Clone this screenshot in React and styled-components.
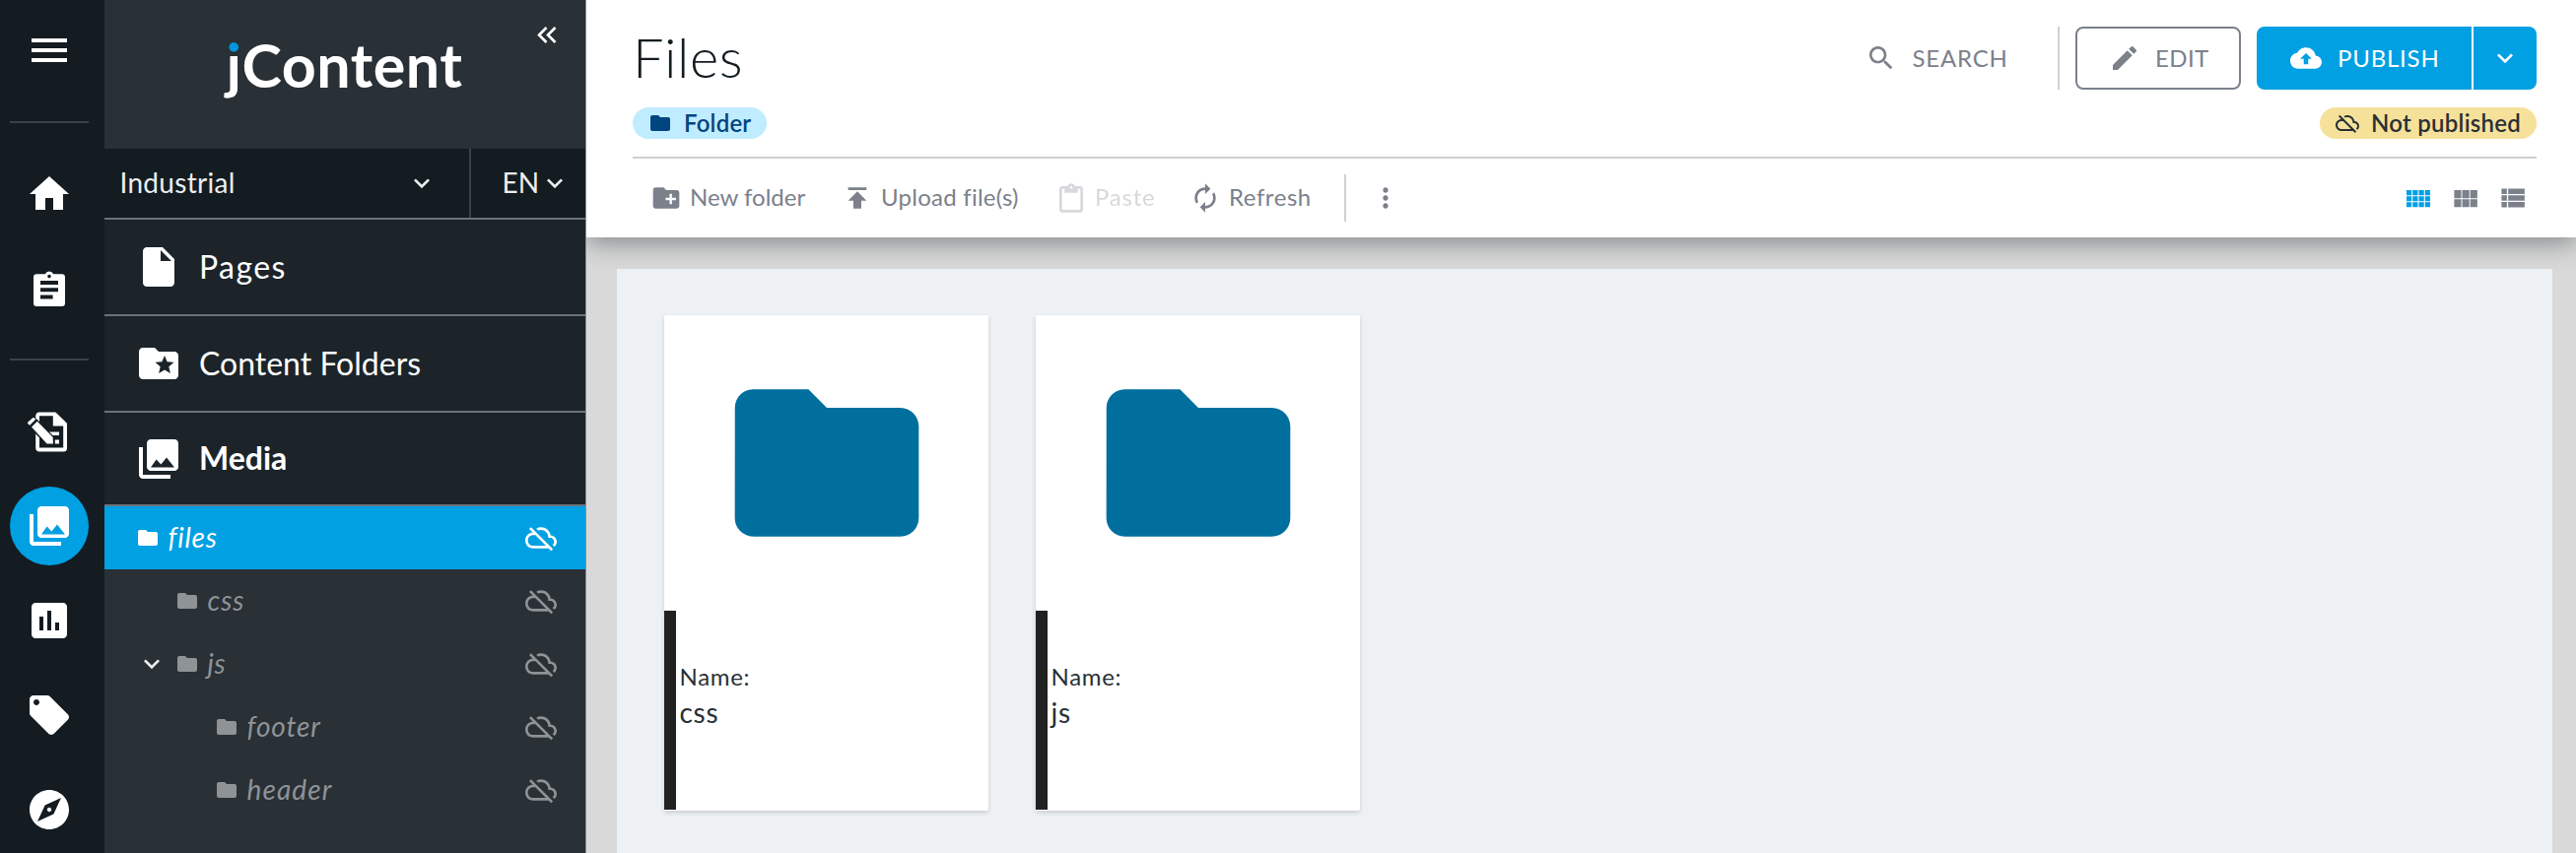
import React from "react";
import styled, { createGlobalStyle } from "styled-components";

const c = {
  rail: "#141c22",
  sidebar: "#293036",
  section: "#1c242a",
  selector: "#131c21",
  accent: "#00a0e3",
  gray: "#7b808b",
  line: "#d0d1d3",
  dark: "#131c21",
};

const GlobalStyle = createGlobalStyle`
  *, *::before, *::after { box-sizing: border-box; }
  body {
    margin: 0;
    font-family: Lato, "Open Sans", sans-serif;
    overflow: hidden;
  }
  button { font: inherit; color: inherit; background: none; border: 0; padding: 0; }
`;

/* ---------- icons ---------- */

const Svg = styled.svg`
  display: block;
  flex: none;
  width: ${(p) => p.$size}px;
  height: ${(p) => p.$size}px;
  fill: currentColor;
`;

const paths = {
  menu: "M3 18h18v-2H3v2zm0-5h18v-2H3v2zm0-7v2h18V6H3z",
  home: "M10 20v-6h4v6h5v-8h3L12 3 2 12h3v8z",
  collections:
    "M22 16V4c0-1.1-.9-2-2-2H8c-1.1 0-2 .9-2 2v12c0 1.1.9 2 2 2h12c1.1 0 2-.9 2-2zM10.8 12.2l2.4 2.5L16 11.2l4 5H8l2.8-4zM2 6v14c0 1.1.9 2 2 2h14v-2H4V6H2z",
  chart:
    "M19 3H5c-1.1 0-2 .9-2 2v14c0 1.1.9 2 2 2h14c1.1 0 2-.9 2-2V5c0-1.1-.9-2-2-2zM9 17H7v-7h2v7zm4 0h-2V7h2v10zm4 0h-2v-4h2v4z",
  tag: "M21.41 11.58l-9-9C12.05 2.22 11.55 2 11 2H4c-1.1 0-2 .9-2 2v7c0 .55.22 1.05.59 1.42l9 9c.36.36.86.58 1.41.58.55 0 1.05-.22 1.41-.59l7-7c.37-.36.59-.86.59-1.41 0-.55-.23-1.06-.59-1.42zM5.5 7C4.67 7 4 6.33 4 5.5S4.67 4 5.5 4 7 4.67 7 5.5 6.33 7 5.5 7z",
  compass:
    "M12 10.9c-.61 0-1.1.49-1.1 1.1s.49 1.1 1.1 1.1c.61 0 1.1-.49 1.1-1.1s-.49-1.1-1.1-1.1zM12 2C6.48 2 2 6.48 2 12s4.48 10 10 10 10-4.48 10-10S17.52 2 12 2zm2.19 12.19L6 18l3.81-8.19L18 6l-3.81 8.19z",
  file: "M6 2c-1.1 0-1.99.9-1.99 2L4 20c0 1.1.89 2 1.99 2H18c1.1 0 2-.9 2-2V8l-6-6H6zm7 7V3.5L18.5 9H13z",
  folderSpecial:
    "M20 6h-8l-2-2H4c-1.1 0-2 .9-2 2v12c0 1.1.9 2 2 2h16c1.1 0 2-.9 2-2V8c0-1.1-.9-2-2-2zm-2.06 11L15 15.28 12.06 17l.78-3.33-2.59-2.24 3.41-.29L15 8l1.34 3.14 3.41.29-2.59 2.24.78 3.33z",
  folder: "M10 4H4c-1.1 0-1.99.9-1.99 2L2 18c0 1.1.9 2 2 2h16c1.1 0 2-.9 2-2V8c0-1.1-.9-2-2-2h-8l-2-2z",
  cloudOff:
    "M24 15c0-2.64-2.05-4.78-4.65-4.96C18.67 6.59 15.64 4 12 4c-1.33 0-2.57.36-3.65.97l1.49 1.49C10.51 6.17 11.23 6 12 6c3.04 0 5.5 2.46 5.5 5.5v.5H19c1.66 0 3 1.34 3 3 0 .99-.48 1.85-1.21 2.4l1.41 1.41C23.29 17.92 24 16.54 24 15zM4.41 3.86L3 5.27l2.77 2.77h-.42C2.34 8.36 0 10.91 0 14c0 3.31 2.69 6 6 6h11.73l2 2 1.41-1.41L4.41 3.86zM6 18c-2.21 0-4-1.79-4-4s1.79-4 4-4h1.73l8 8H6z",
  chevron: "M7.41 8.59L12 13.17l4.59-4.58L18 10l-6 6-6-6z",
  search:
    "M15.5 14h-.79l-.28-.27C15.41 12.59 16 11.11 16 9.5 16 5.91 13.09 3 9.5 3S3 5.91 3 9.5 5.91 16 9.5 16c1.61 0 3.09-.59 4.23-1.57l.27.28v.79l5 4.99L20.49 19l-4.99-5zm-6 0C7.01 14 5 11.99 5 9.5S7.01 5 9.5 5 14 7.01 14 9.5 11.99 14 9.5 14z",
  edit: "M3 17.25V21h3.75L17.81 9.94l-3.75-3.75L3 17.25zM20.71 7.04c.39-.39.39-1.02 0-1.41l-2.34-2.34c-.39-.39-1.02-.39-1.41 0l-1.83 1.83 3.75 3.75 1.83-1.83z",
  cloudUpload:
    "M19.35 10.04C18.67 6.59 15.64 4 12 4 9.11 4 6.6 5.64 5.35 8.04 2.34 8.36 0 10.91 0 14c0 3.31 2.69 6 6 6h13c2.76 0 5-2.24 5-5 0-2.64-2.05-4.78-4.65-4.96zM13.7 12.6v4h-3.4v-4H7.6L12 8.2l4.4 4.4h-2.7z",
  newFolder:
    "M20 6h-8l-2-2H4c-1.11 0-1.99.89-1.99 2L2 18c0 1.11.89 2 2 2h16c1.11 0 2-.89 2-2V8c0-1.11-.89-2-2-2zm-.6 7.7h-3v3h-1.8v-3h-3v-1.8h3v-3h1.8v3h3v1.8z",
  upload: "M5 4v2h14V4H5zm0 10h4v6h6v-6h4l-7-7-7 7z",
  paste:
    "M19 3h-4.18C14.4 1.84 13.3 1 12 1c-1.3 0-2.4.84-2.82 2H5c-1.1 0-2 .9-2 2v16c0 1.1.9 2 2 2h14c1.1 0 2-.9 2-2V5c0-1.1-.9-2-2-2zm-7 0c.55 0 1 .45 1 1s-.45 1-1 1-1-.45-1-1 .45-1 1-1zm7 18H5V5h2v3h10V5h2v16z",
  refresh:
    "M12 6v3l4-4-4-4v3c-4.42 0-8 3.58-8 8 0 1.57.46 3.03 1.24 4.26L6.7 14.8c-.45-.83-.7-1.79-.7-2.8 0-3.31 2.69-6 6-6zm6.76 1.74L17.3 9.2c.44.84.7 1.79.7 2.8 0 3.31-2.69 6-6 6v-3l-4 4 4 4v-3c4.42 0 8-3.58 8-8 0-1.57-.46-3.03-1.24-4.26z",
  more: "M12 8c1.1 0 2-.9 2-2s-.9-2-2-2-2 .9-2 2 .9 2 2 2zm0 2c-1.1 0-2 .9-2 2s.9 2 2 2 2-.9 2-2-.9-2-2-2zm0 6c-1.1 0-2 .9-2 2s.9 2 2 2 2-.9 2-2-.9-2-2-2z",
  gridSmall:
    "M3 6h3.9v3.9H3zM7.7 6h3.9v3.9H7.7zM12.4 6h3.9v3.9h-3.9zM17.1 6H21v3.9h-3.9zM3 10.6h3.9v3.9H3zM7.7 10.6h3.9v3.9H7.7zM12.4 10.6h3.9v3.9h-3.9zM17.1 10.6H21v3.9h-3.9zM3 15.2h3.9V19H3zM7.7 15.2h3.9V19H7.7zM12.4 15.2h3.9V19h-3.9zM17.1 15.2H21V19h-3.9z",
  gridLarge:
    "M3.3 6h5.4v6.1H3.3zM9.4 6h5.4v6.1H9.4zM15.5 6h5.4v6.1h-5.4zM3.3 12.9h5.4V19H3.3zM9.4 12.9h5.4V19H9.4zM15.5 12.9h5.4V19h-5.4z",
  list: "M3.3 4.8h4.1V9H3.3zM8.4 4.8h12.5V9H8.4zM3.3 9.9h4.1v4.2H3.3zM8.4 9.9h12.5v4.2H8.4zM3.3 15h4.1v4.2H3.3zM8.4 15h12.5v4.2H8.4z",
  clipboard:
    "M18.4 4.6h-4.3a2.3 2.3 0 0 0-4.2 0H5.6A1.6 1.6 0 0 0 4 6.2v13.2A1.6 1.6 0 0 0 5.6 21h12.8a1.6 1.6 0 0 0 1.6-1.6V6.2a1.6 1.6 0 0 0-1.6-1.6zM12 4.9a.9.9 0 1 1 0 1.8.9.9 0 0 1 0-1.8zM7.5 8h9v2h-9zM7.5 11.6h9v2h-9zM7.5 15.2h6.3v2H7.5z",
};

const Icon = ({ name, size = 32, ...rest }) => (
  <Svg $size={size} viewBox="0 0 24 24" {...rest}>
    <path d={paths[name]} fillRule="evenodd" />
  </Svg>
);

const DraftIcon = () => (
  <Svg $size={48} viewBox="0 0 24 24">
    <path
      d="M7 2.2h8.2L21 7.9v12.6a1.8 1.8 0 0 1-1.8 1.8H7a1.8 1.8 0 0 1-1.9-1.8V4A1.8 1.8 0 0 1 7 2.2zM7 4.1v16.2h12.1V9.3h-5.2V4.1z"
      fillRule="evenodd"
    />
    <path d="M12 12.2h5v1.8h-5zM14.9 16.2H17v2h-2.1z" />
    <path d="M.4 8L4 4.4l2.2 1.8 8.3 8.5.1 4.2h-4.2L2.8 10.7z" fill={c.rail} />
    <path d="M1.2 7.3L3.6 5.1q.4-.3.8 0l.7.8-3 3-.9-.8q-.4-.4 0-.8zM3 9.8L5.9 6.9l7.9 8 .2 3.4h-3.2z" />
  </Svg>
);

const CollapseIcon = styled.svg`
  display: block;
  width: 20px;
  height: 17px;
  fill: none;
  stroke: #fff;
  stroke-width: 2.6;
`;

/* ---------- text ---------- */

const Label = styled.span`
  display: block;
  white-space: nowrap;
  font-size: ${(p) => p.$size || 24}px;
  font-weight: ${(p) => p.$weight || 400};
  font-style: ${(p) => (p.$italic ? "italic" : "normal")};
  letter-spacing: ${(p) => p.$track || 0}px;
  line-height: 1.2;
`;

/* ---------- application rail ---------- */

const Page = styled.div`
  display: flex;
  height: 866px;
  width: 100%;
  overflow: hidden;
`;

const Rail = styled.nav`
  flex: none;
  width: 105.5px;
  padding: 11px 15.5px 0 10px;
  background: ${c.rail};
  color: #fff;
`;

const RailGroup = styled.div`
  display: flex;
  flex-direction: column;
  gap: 16px;
  padding: ${(p) => p.$pad};
`;

const RailItem = styled.button`
  display: grid;
  place-items: center;
  width: 80px;
  height: 80px;
  border-radius: 50%;
  background: ${(p) => (p.$active ? c.accent : "transparent")};
`;

const RailRule = styled.hr`
  height: 2px;
  margin: 0;
  border: 0;
  background: #3a4147;
`;

/* ---------- sidebar ---------- */

const Sidebar = styled.aside`
  position: relative;
  z-index: 2;
  flex: none;
  width: 489px;
  border-right: 1px solid #8b8f92;
  background: ${c.sidebar};
  color: #fff;
`;

const Brand = styled.div`
  position: relative;
  display: flex;
  justify-content: center;
  height: 151px;
  padding-top: 30px;
`;

const Wordmark = styled.div`
  height: 72px;
  font-size: 61px;
  font-weight: 700;
  line-height: 72px;
  letter-spacing: 0.5px;
`;

const WordmarkInitial = styled.span`
  display: inline-block;
  background: linear-gradient(#0096dc 24px, #fff 24px);
  background-clip: text;
  -webkit-background-clip: text;
  color: transparent;
  padding-left: 8px;
  margin-left: -8px;
`;

const Collapse = styled.button`
  position: absolute;
  top: 27px;
  right: 29px;
`;

const Selectors = styled.div`
  display: flex;
  height: 72px;
  background: ${c.selector};
  color: #eceeef;
  border-bottom: 2px solid #6b727a;
`;

const Selector = styled.button`
  display: flex;
  align-items: center;
  justify-content: space-between;
  flex: ${(p) => (p.$fill ? 1 : "none")};
  width: ${(p) => (p.$fill ? "auto" : "118px")};
  padding: ${(p) => (p.$fill ? "0 32px 0 16px" : "0 16px 0 32px")};
  border-left: ${(p) => (p.$fill ? "0" : "2px solid #3a4147")};
`;

const Section = styled.button`
  display: flex;
  align-items: center;
  gap: 17px;
  width: 100%;
  height: ${(p) => p.$h || 98}px;
  padding-left: 31.5px;
  background: ${c.section};
  border-bottom: 2px solid #6b727a;
`;

const TreeRow = styled.div`
  display: flex;
  align-items: center;
  height: 64px;
  padding: 0 29px 0 ${(p) => 32 + p.$level * 40}px;
  background: ${(p) => (p.$active ? c.accent : "transparent")};
  color: ${(p) => (p.$active ? "#fff" : "#8f9396")};
`;

const Toggle = styled.span`
  width: 32px;
  margin: 0 8px 0 -40px;
  color: #eef0f1;
`;

const TreeName = styled(Label)`
  flex: 1;
  margin-left: 9px;
`;

/* ---------- main ---------- */

const Main = styled.main`
  flex: 1;
  min-width: 0;
  display: flex;
  flex-direction: column;
  background: #d9d9d9;
`;

const Header = styled.header`
  position: relative;
  z-index: 1;
  flex: none;
  height: 241px;
  padding: 27px 40px 0 47.5px;
  background: #fff;
  color: ${c.gray};
  box-shadow: 0 6px 24px rgba(19, 28, 33, 0.42);
`;

const Bar = styled.div`
  display: flex;
  align-items: center;
  justify-content: space-between;
  height: ${(p) => p.$h}px;
`;

const Title = styled.h1`
  margin: 0;
  padding-bottom: 2px;
  font-size: 56px;
  font-weight: 300;
  line-height: 60px;
  letter-spacing: 0.6px;
  color: ${c.dark};
`;

const Actions = styled.div`
  display: flex;
  align-items: center;
  gap: 16px;
`;

const Button = styled.button`
  display: flex;
  align-items: center;
  gap: ${(p) => p.$gap || 16}px;
  height: 64px;
`;

const SearchButton = styled(Button)`
  width: 179px;
`;

const EditButton = styled(Button)`
  width: 168.5px;
  padding-left: 32px;
  border: 2px solid ${c.gray};
  border-radius: 8px;
`;

const Split = styled.div`
  display: flex;
  gap: 2px;
  color: #fff;
`;

const PublishButton = styled(Button)`
  width: 218px;
  padding-left: 34px;
  background: ${c.accent};
  border-radius: 8px 0 0 8px;
`;

const PublishMenu = styled(Button)`
  width: 64px;
  justify-content: center;
  background: ${c.accent};
  border-radius: 0 8px 8px 0;
`;

const VRule = styled.span`
  flex: none;
  width: 2px;
  height: ${(p) => p.$h}px;
  background: ${c.line};
`;

const Chips = styled(Bar)`
  margin: 18px 0;
`;

const Chip = styled.span`
  display: flex;
  align-items: center;
  gap: 12px;
  height: 32px;
  width: ${(p) => p.$w}px;
  padding-left: 16px;
  border-radius: 16px;
  background: ${(p) => p.$bg};
  color: ${(p) => p.$fg};
`;

const Toolbar = styled(Bar)`
  border-top: 2px solid #cfd0d2;
  padding: 0 8px 0 18px;
`;

const Tools = styled.div`
  display: flex;
  align-items: center;
`;

const Tool = styled.button`
  display: flex;
  align-items: center;
  gap: 8px;
  width: ${(p) => p.$w}px;
  opacity: ${(p) => (p.disabled ? 0.3 : 1)};
`;

const MoreButton = styled.button`
  margin-left: 23.5px;
`;

const ViewButton = styled.button`
  color: ${(p) => (p.$active ? c.accent : c.gray)};
`;

const Content = styled.section`
  flex: 1;
  display: flex;
  align-items: flex-start;
  gap: 48px;
  margin: 32px 24.5px 0 31.5px;
  padding: 47px 48px;
  background: #edf1f4;
`;

const Card = styled.article`
  flex: none;
  width: 329px;
  height: 503px;
  border-radius: 2px;
  background: #fff;
  box-shadow: 0 2px 4px rgba(19, 28, 33, 0.17);
`;

const Preview = styled.div`
  display: grid;
  place-items: center;
  height: 300px;
  color: #006f9e;
`;

const Info = styled.div`
  height: 202px;
  padding: 50.5px 0 0 3.5px;
  border-left: 12px solid #212121;
  color: #293036;
`;

const InfoLine = styled.div`
  height: ${(p) => p.$h}px;
  line-height: ${(p) => p.$h}px;
  font-size: ${(p) => p.$size}px;
  letter-spacing: 0.7px;
`;

/* ---------- data ---------- */

const tree = [
  { name: "files", level: 0, active: true, track: 0.8 },
  { name: "css", level: 1, track: 0.9 },
  { name: "js", level: 1, open: true, track: 0.5 },
  { name: "footer", level: 2, track: 0.9 },
  { name: "header", level: 2, track: 1.1 },
];

const railBottom = ["collections", "chart", "tag", "compass"];

export default function App() {
  return (
    <>
      <GlobalStyle />
      <Page>
        <Rail>
          <RailGroup $pad="0 0 32px">
            <RailItem><Icon name="menu" size={48} /></RailItem>
          </RailGroup>
          <RailRule />
          <RailGroup $pad="32px 0 31px">
            <RailItem><Icon name="home" size={48} /></RailItem>
            <RailItem><Icon name="clipboard" size={48} /></RailItem>
          </RailGroup>
          <RailRule />
          <RailGroup $pad="32px 0 0">
            <RailItem><DraftIcon /></RailItem>
            {railBottom.map((n) => (
              <RailItem key={n} $active={n === "collections"}>
                <Icon name={n} size={48} />
              </RailItem>
            ))}
          </RailGroup>
        </Rail>

        <Sidebar>
          <Brand>
            <Wordmark><WordmarkInitial>j</WordmarkInitial>Content</Wordmark>
            <Collapse>
              <CollapseIcon viewBox="0 0 20 17">
                <path d="M9.5 1L2 8.5 9.5 16M18.5 1L11 8.5l7.5 7.5" />
              </CollapseIcon>
            </Collapse>
          </Brand>
          <Selectors>
            <Selector $fill>
              <Label $size={28} $track={0.3}>Industrial</Label>
              <Icon name="chevron" />
            </Selector>
            <Selector>
              <Label $size={28}>EN</Label>
              <Icon name="chevron" />
            </Selector>
          </Selectors>
          <Section>
            <Icon name="file" size={48} />
            <Label $size={32} $track={1.4}>Pages</Label>
          </Section>
          <Section>
            <Icon name="folderSpecial" size={48} />
            <Label $size={32}>Content Folders</Label>
          </Section>
          <Section $h={95}>
            <Icon name="collections" size={48} />
            <Label $size={32} $weight={700}>Media</Label>
          </Section>
          {tree.map((n) => (
            <TreeRow key={n.name} $level={n.level} $active={n.active}>
              {n.open && <Toggle><Icon name="chevron" /></Toggle>}
              <Icon name="folder" size={24} />
              <TreeName $size={28} $italic $track={n.track}>{n.name}</TreeName>
              <Icon name="cloudOff" />
            </TreeRow>
          ))}
        </Sidebar>

        <Main>
          <Header>
            <Bar $h={64}>
              <Title>Files</Title>
              <Actions>
                <SearchButton>
                  <Icon name="search" />
                  <Label $track={0.8}>SEARCH</Label>
                </SearchButton>
                <VRule $h={64} />
                <EditButton $gap={15.5}>
                  <Icon name="edit" />
                  <Label $track={0.4}>EDIT</Label>
                </EditButton>
                <Split>
                  <PublishButton>
                    <Icon name="cloudUpload" />
                    <Label $track={0.8}>PUBLISH</Label>
                  </PublishButton>
                  <PublishMenu><Icon name="chevron" /></PublishMenu>
                </Split>
              </Actions>
            </Bar>
            <Chips $h={32}>
              <Chip $w={136} $bg="#bfecff" $fg="#004580">
                <Icon name="folder" size={24} />
                <Label $weight={600} $track={0.2}>Folder</Label>
              </Chip>
              <Chip $w={220} $bg="#f6e19a" $fg="#293036">
                <Icon name="cloudOff" size={24} />
                <Label $weight={600} $track={0.25}>Not published</Label>
              </Chip>
            </Chips>
            <Toolbar $h={81}>
              <Tools>
                <Tool $w={194}><Icon name="newFolder" /><Label>New folder</Label></Tool>
                <Tool $w={217}><Icon name="upload" /><Label $track={0.25}>Upload file(s)</Label></Tool>
                <Tool $w={136} disabled><Icon name="paste" /><Label $track={0.8}>Paste</Label></Tool>
                <Tool $w={157}><Icon name="refresh" /><Label $track={0.55}>Refresh</Label></Tool>
                <VRule $h={48} />
                <MoreButton><Icon name="more" /></MoreButton>
              </Tools>
              <Actions>
                <ViewButton $active><Icon name="gridSmall" /></ViewButton>
                <ViewButton><Icon name="gridLarge" /></ViewButton>
                <ViewButton><Icon name="list" /></ViewButton>
              </Actions>
            </Toolbar>
          </Header>
          <Content>
            {["css", "js"].map((name) => (
              <Card key={name}>
                <Preview><Icon name="folder" size={224} /></Preview>
                <Info>
                  <InfoLine $h={32} $size={24}>Name:</InfoLine>
                  <InfoLine $h={41} $size={28}>{name}</InfoLine>
                </Info>
              </Card>
            ))}
          </Content>
        </Main>
      </Page>
    </>
  );
}
